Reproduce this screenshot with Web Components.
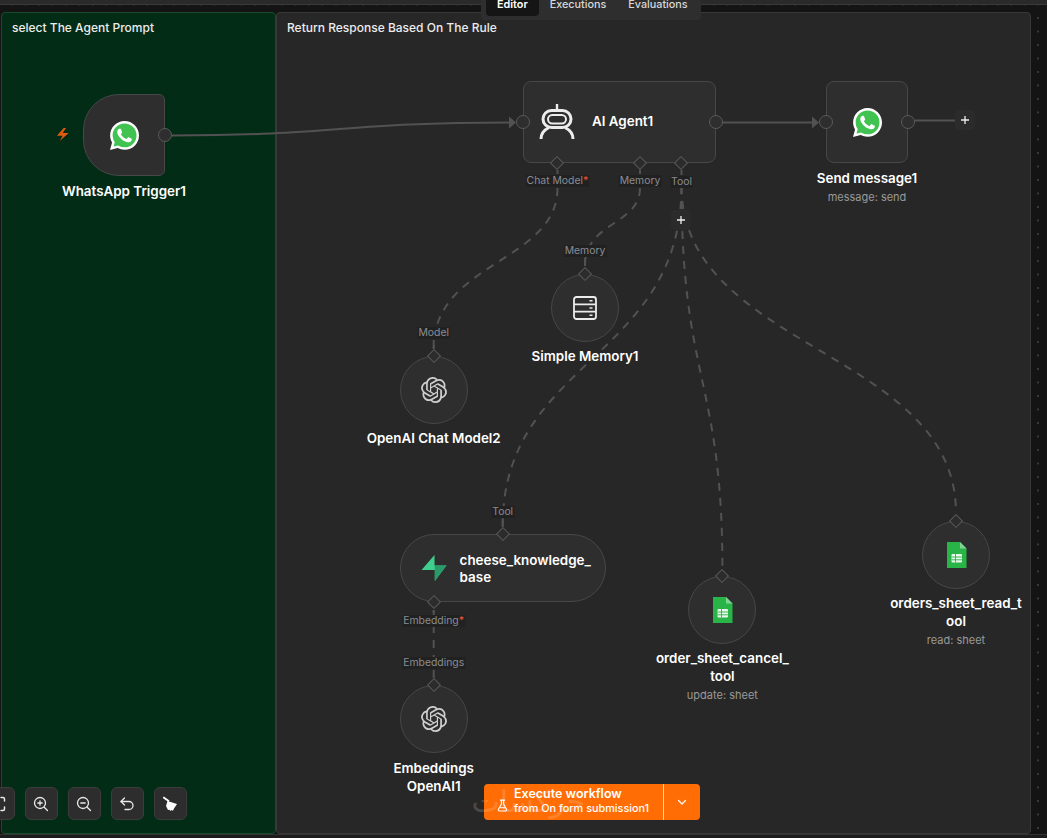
<!DOCTYPE html>
<html lang="en">
<head>
<meta charset="utf-8">
<title>Workflow editor</title>
<style>
    html, body { margin: 0; height: 100%; background: #141414; overflow: hidden; }
    body { font-family: Inter, "Liberation Sans", sans-serif; }
</style>
</head>
<body>
<wf-app>
    <wf-topbar slot="top">
        <wf-tab active>Editor</wf-tab>
        <wf-tab>Executions</wf-tab>
        <wf-tab>Evaluations</wf-tab>
    </wf-topbar>

    <wf-sticky x="1" y="12" w="275" h="822" tone="green">select The Agent Prompt</wf-sticky>
    <wf-sticky x="276" y="12" w="755" h="822">Return Response Based On The Rule</wf-sticky>

    <wf-edges></wf-edges>

    <wf-node cx="124" y="94" w="82" h="82" shape="trigger" out bolt gap="6">
        <wf-icon slot="icon" name="whatsapp" size="29"></wf-icon>
        WhatsApp Trigger1
    </wf-node>
    <wf-node cx="619.5" y="81" w="193" h="82" shape="wide" in out ports="34.5,117.5,158.5">
        <wf-icon slot="icon" name="robot" size="36"></wf-icon>
        <span slot="title">AI Agent1</span>
    </wf-node>
    <wf-node cx="867" y="81" w="82" h="82" in out sub="message: send" gap="6">
        <wf-icon slot="icon" name="whatsapp" size="29"></wf-icon>
        Send message1
    </wf-node>
    <wf-node cx="585" y="274" w="68" h="68" shape="circle" top-port>
        <wf-icon slot="icon" name="memory" size="24"></wf-icon>
        Simple Memory1
    </wf-node>
    <wf-node cx="433.7" y="356" w="68" h="68" shape="circle" top-port>
        <wf-icon slot="icon" name="openai" size="26"></wf-icon>
        OpenAI Chat Model2
    </wf-node>
    <wf-node cx="502.6" y="534" w="206" h="68" shape="pill" top-port ports="34.5">
        <wf-icon slot="icon" name="bolt" size="26"></wf-icon>
        <span slot="title">cheese_knowledge_<br>base</span>
    </wf-node>
    <wf-node cx="433.7" y="685" w="68" h="68" shape="circle" top-port gap="6">
        <wf-icon slot="icon" name="openai" size="26"></wf-icon>
        Embeddings<br>OpenAI1
    </wf-node>
    <wf-node cx="722.4" y="576" w="68" h="68" shape="circle" top-port sub="update: sheet">
        <wf-icon slot="icon" name="sheet" size="26"></wf-icon>
        order_sheet_cancel_<br>tool
    </wf-node>
    <wf-node cx="956" y="521" w="68" h="68" shape="circle" top-port sub="read: sheet">
        <wf-icon slot="icon" name="sheet" size="26"></wf-icon>
        orders_sheet_read_t<br>ool
    </wf-node>

    <wf-port x="557.5" y="181" required>Chat Model</wf-port>
    <wf-port x="640" y="181">Memory</wf-port>
    <wf-port x="681.5" y="182">Tool</wf-port>
    <wf-port x="585" y="251">Memory</wf-port>
    <wf-port x="433.7" y="333">Model</wf-port>
    <wf-port x="502.7" y="512">Tool</wf-port>
    <wf-port x="433.7" y="621" required>Embedding</wf-port>
    <wf-port x="433.7" y="663">Embeddings</wf-port>

    <wf-plus x="965" y="120"></wf-plus>
    <wf-plus x="681" y="220"></wf-plus>

    <wf-toolbar>
        <wf-tool-button name="fit"></wf-tool-button>
        <wf-tool-button name="zoomin"></wf-tool-button>
        <wf-tool-button name="zoomout"></wf-tool-button>
        <wf-tool-button name="undo"></wf-tool-button>
        <wf-tool-button name="broom"></wf-tool-button>
    </wf-toolbar>

    <wf-execute subtitle="from On form submission1">Execute workflow</wf-execute>
</wf-app>

<script>
const CANVAS_TOP = 5;
const NODE_BORDER = 1.5;

const ICONS = {
    whatsapp: `<svg viewBox="0 0 24 24"><path fill="#fff" d="M20.52 3.449C18.24 1.245 15.24 0 12.045 0 5.463 0 .104 5.334.101 11.893c0 2.096.549 4.14 1.595 5.945L0 24l6.335-1.652a12.062 12.062 0 005.71 1.447h.006c6.585 0 11.946-5.336 11.949-11.896 0-3.176-1.24-6.165-3.48-8.45z"/><path fill="#40c351" d="M12.051 21.785h-.004a9.87 9.87 0 01-5.031-1.378l-.361-.214-3.741.982.998-3.648-.235-.374a9.86 9.86 0 01-1.51-5.26c.001-5.45 4.436-9.884 9.888-9.884 2.64 0 5.122 1.03 6.988 2.898a9.825 9.825 0 012.893 6.994c-.003 5.45-4.437 9.884-9.885 9.884"/><path fill="#fff" d="M17.472 14.382c-.297-.149-1.758-.867-2.03-.967-.273-.099-.471-.148-.67.15-.197.297-.767.966-.94 1.164-.173.199-.347.223-.644.075-.297-.15-1.255-.463-2.39-1.475-.883-.788-1.48-1.761-1.653-2.059-.173-.297-.018-.458.13-.606.134-.133.298-.347.446-.52.149-.174.198-.298.298-.497.099-.198.05-.371-.025-.52-.075-.149-.669-1.612-.916-2.207-.242-.579-.487-.5-.669-.51-.173-.008-.371-.01-.57-.01-.198 0-.52.074-.792.372-.272.297-1.04 1.016-1.04 2.479 0 1.462 1.065 2.875 1.213 3.074.149.198 2.096 3.2 5.077 4.487.709.306 1.262.489 1.694.625.712.227 1.36.195 1.871.118.571-.085 1.758-.719 2.006-1.413.248-.694.248-1.289.173-1.413-.074-.124-.272-.198-.57-.347"/></svg>`,
    openai: `<svg viewBox="0 0 24 24"><path fill="#cfcfcf" d="M22.2819 9.8211a5.9847 5.9847 0 0 0-.5157-4.9108 6.0462 6.0462 0 0 0-6.5098-2.9A6.0651 6.0651 0 0 0 4.9807 4.1818a5.9847 5.9847 0 0 0-3.9977 2.9 6.0462 6.0462 0 0 0 .7427 7.0966 5.98 5.98 0 0 0 .511 4.9107 6.051 6.051 0 0 0 6.5146 2.9001A5.9847 5.9847 0 0 0 13.2599 24a6.0557 6.0557 0 0 0 5.7718-4.2058 5.9894 5.9894 0 0 0 3.9977-2.9001 6.0557 6.0557 0 0 0-.7475-7.0729zm-9.022 12.6081a4.4755 4.4755 0 0 1-2.8764-1.0408l.1419-.0804 4.7783-2.7582a.7948.7948 0 0 0 .3927-.6813v-6.7369l2.02 1.1686a.071.071 0 0 1 .038.052v5.5826a4.504 4.504 0 0 1-4.4945 4.4944zm-9.6607-4.1254a4.4708 4.4708 0 0 1-.5346-3.0137l.142.0852 4.783 2.7582a.7712.7712 0 0 0 .7806 0l5.8428-3.3685v2.3324a.0804.0804 0 0 1-.0332.0615L9.74 19.9502a4.4992 4.4992 0 0 1-6.1408-1.6464zM2.3408 7.8956a4.485 4.485 0 0 1 2.3655-1.9728V11.6a.7664.7664 0 0 0 .3879.6765l5.8144 3.3543-2.0201 1.1685a.0757.0757 0 0 1-.071 0l-4.8303-2.7865A4.504 4.504 0 0 1 2.3408 7.872zm16.5963 3.8558L13.1038 8.364 15.1192 7.2a.0757.0757 0 0 1 .071 0l4.8303 2.7913a4.4944 4.4944 0 0 1-.6765 8.1042v-5.6772a.79.79 0 0 0-.407-.667zm2.0107-3.0231l-.142-.0852-4.7735-2.7818a.7759.7759 0 0 0-.7854 0L9.409 9.2297V6.8974a.0662.0662 0 0 1 .0284-.0615l4.8303-2.7866a4.4992 4.4992 0 0 1 6.6802 4.66zM8.3065 12.863l-2.02-1.1638a.0804.0804 0 0 1-.038-.0567V6.0742a4.4992 4.4992 0 0 1 7.3757-3.4537l-.142.0805L8.704 5.459a.7948.7948 0 0 0-.3927.6813zm1.0976-2.3654l2.602-1.4998 2.6069 1.4998v2.9994l-2.5974 1.4997-2.6067-1.4997Z"/></svg>`,
    robot: `<svg viewBox="0 0 36 36" fill="none" stroke="#ececec"><path stroke-width="2.4" d="M18 0v6"/><rect x="4" y="6.500" width="28" height="17" rx="8.500" stroke-width="3"/><rect x="9" y="11" width="18" height="8.500" rx="4.250" stroke-width="2"/><path stroke-width="3" d="M2 35c0-5 3-9 8-11.500M34 35c0-5-3-9-8-11.500"/></svg>`,
    memory: `<svg viewBox="0 0 24 24" fill="none" stroke="#ececec" stroke-width="1.800"><rect x="1" y="1" width="22" height="22" rx="2.500"/><path d="M1 8.300h22M1 15.700h22"/><path stroke-width="1.500" d="M16.500 4.700h3M16.500 12h3M16.500 19.300h3"/></svg>`,
    bolt: `<svg viewBox="0 0 24 25"><path fill="#3ecf8e" d="M12.500 0 0 14.500h12.800V25L24 10H12.500z"/><path fill="#2a9a6b" d="M12.800 14.500V25L24 10H12.800z"/></svg>`,
    sheet: `<svg viewBox="-0.500 0 26 26"><path fill="#28b446" d="M3.500 0h13l6.500 6.500V26H3.500z"/><path fill="#7ed492" d="M16.500 0 23 6.500h-6.500z"/><rect x="8" y="12" width="10.500" height="8.500" rx="1" fill="#e9f7ec"/><path stroke="#28b446" stroke-width=".9" d="M8 15h10.500M8 17.800h10.500M12 12v8.500"/></svg>`,
    flask: `<svg viewBox="0 0 24 24" fill="none" stroke="#fff" stroke-width="2" stroke-linecap="round" stroke-linejoin="round"><path d="M10 2v7.500L4.500 19a2 2 0 0 0 1.700 3h11.600a2 2 0 0 0 1.700-3L14 9.500V2"/><path d="M8 2h8M7 16h10"/></svg>`,
    chevron: `<svg viewBox="0 0 12 12" fill="none" stroke="#fff" stroke-width="1.300" stroke-linecap="round" stroke-linejoin="round"><path d="m2.500 4.500 3.500 3.500 3.500-3.500"/></svg>`,
    fit: `<svg viewBox="0 0 16 16" fill="none" stroke="#e8e8e8" stroke-width="1.500" stroke-linecap="round"><path d="M1.500 5V3a1.500 1.500 0 0 1 1.500-1.500h2M11 1.500h2A1.500 1.500 0 0 1 14.500 3v2M14.500 11v2a1.500 1.500 0 0 1-1.500 1.500h-2M5 14.500H3A1.500 1.500 0 0 1 1.500 13v-2"/></svg>`,
    zoomin: `<svg viewBox="0 0 16 16" fill="none" stroke="#e8e8e8" stroke-width="1.300" stroke-linecap="round"><circle cx="7" cy="7" r="5.500"/><path d="m11.200 11.200 3.300 3.300M7 4.800v4.400M4.800 7h4.400"/></svg>`,
    zoomout: `<svg viewBox="0 0 16 16" fill="none" stroke="#e8e8e8" stroke-width="1.300" stroke-linecap="round"><circle cx="7" cy="7" r="5.500"/><path d="m11.200 11.200 3.300 3.300M4.800 7h4.400"/></svg>`,
    undo: `<svg viewBox="0 0 16 16" fill="none" stroke="#e8e8e8" stroke-width="1.300" stroke-linecap="round" stroke-linejoin="round"><path d="M5.500 2 2 5.500 5.500 9"/><path d="M2 5.500h8a4 4 0 0 1 0 8H6"/></svg>`,
    broom: `<svg viewBox="0 0 16 16"><path stroke="#fff" stroke-width="1.800" d="M1.300 1.300 7 5.300"/><path fill="#fff" d="M5.500 5 15 8l-3 4.500-1 2.300-1.500-.800-1 1-1-1.200-1.500.200L4 10z"/></svg>`
};

class WfApp extends HTMLElement {
    constructor() {
        super();
        this.attachShadow({ mode: "open" });
        this.shadowRoot.innerHTML = `
        <style>
            :host {
                display: grid;
                grid-template-rows: 5px 1fr 4px;
                width: 1047px;
                height: 838px;
                background: #141414;
                color: #fff;
                overflow: hidden;
            }
            #canvas {
                position: relative;
                overflow: visible;
                background-color: #141414;
                background-image: radial-gradient(circle at 1px 1px, #3a3a3a 0.8px, transparent 1px);
                background-size: 13.5px 13.5px;
                background-position: 11px -1.5px;
            }
            #bottom {
                background: #1c1c1c;
                border-top: 1px solid #333;
            }
        </style>
        <slot name="top"></slot>
        <div id="canvas"><slot></slot></div>
        <div id="bottom"></div>
        `;
    }
}

class WfTopbar extends HTMLElement {
    constructor() {
        super();
        this.attachShadow({ mode: "open" });
        this.shadowRoot.innerHTML = `
        <style>
            :host {
                display: block;
                position: relative;
                z-index: 5;
                height: 5px;
                box-sizing: border-box;
                background: #2a2a2a;
                border-bottom: 1px solid #3a3a3a;
            }
            /* tab switcher hangs over the top of the canvas */
            #tabs {
                position: absolute;
                left: 481px;
                bottom: -16px;
                width: 220px;
                height: 36px;
                box-sizing: border-box;
                padding: 0 5px 4px 5px;
                display: flex;
                align-items: flex-end;
                background: #2e2e2e;
                border-radius: 4px;
            }
        </style>
        <div id="tabs"><slot></slot></div>
        `;
    }
}

class WfTab extends HTMLElement {
    constructor() {
        super();
        this.attachShadow({ mode: "open" });
        this.shadowRoot.innerHTML = `
        <style>
            :host {
                padding: 0 11px 5px;
                height: 32px;
                box-sizing: border-box;
                display: flex;
                align-items: flex-end;
                font-size: 10.8px;
                line-height: 13px;
                font-weight: 500;
                color: #d8d8d8;
                border-radius: 4px;
            }
            :host([active]) {
                background: #151515;
                color: #fff;
                font-weight: 600;
            }
        </style>
        <slot></slot>
        `;
    }
}

class WfSticky extends HTMLElement {
    constructor() {
        super();
        this.attachShadow({ mode: "open" });
        this.shadowRoot.innerHTML = `
        <style>
            :host {
                position: absolute;
                box-sizing: border-box;
                padding: 7px 10px;
                font-size: 12px;
                line-height: 16px;
                font-weight: 500;
                color: #ececec;
                background: #272727;
                border: 1px solid #383838;
                border-radius: 4px;
            }
            :host([tone="green"]) {
                background: #032c17;
                border-color: #1a4a2d;
            }
        </style>
        <slot></slot>
        `;
    }

    connectedCallback() {
        this.style.left = this.getAttribute("x") + "px";
        this.style.top = (this.getAttribute("y") - CANVAS_TOP) + "px";
        this.style.width = this.getAttribute("w") + "px";
        this.style.height = this.getAttribute("h") + "px";
    }
}

class WfEdges extends HTMLElement {
    constructor() {
        super();
        this.attachShadow({ mode: "open" });
        const dashed = [
            "M557.500 188C557.500 262 433.700 262 433.700 348",
            "M640 188C640 225 585 222 585 265",
            "M681.500 186C681.500 360 502.700 360 502.700 526",
            "M681.500 186C681.500 380 722.400 380 722.400 568",
            "M681.500 186C681.500 350 956 350 956 513",
            "M433.700 610V678"
        ];
        this.shadowRoot.innerHTML = `
        <style>
            :host { position: absolute; inset: 0; display: block; }
            svg { display: block; overflow: visible; }
            path { fill: none; stroke: #525252; stroke-width: 2; }
            .dash { stroke-dasharray: 8 7; }
            .arrow { fill: #525252; stroke: none; }
        </style>
        <svg width="1047" height="829" viewBox="0 5 1047 829">
            <path d="M172 135.500C340 135.500 340 122.500 512 122.500"/>
            <path class="arrow" d="M509 116.500l7 6-7 6z"/>
            <path d="M722 122.500H813"/>
            <path class="arrow" d="M812 116.500l7 6-7 6z"/>
            <path d="M915 120.500H955"/>
            <path d="M557.500 170v4M640 170v4M681.500 170v5M585 258v8M433.700 340v9M502.700 519v8M433.700 610v3"/>
            ${dashed.map((d) => `<path class="dash" d="${d}"/>`).join("")}
        </svg>
        `;
    }
}

class WfNode extends HTMLElement {
    constructor() {
        super();
        this.attachShadow({ mode: "open" });
    }

    connectedCallback() {
        const w = Number(this.getAttribute("w"));
        const h = Number(this.getAttribute("h"));
        const shape = this.getAttribute("shape") || "square";
        const ports = (this.getAttribute("ports") || "").split(",").filter(Boolean);
        const sub = this.getAttribute("sub");
        const gap = this.getAttribute("gap") || "5";
        const hasTitle = shape === "wide" || shape === "pill";

        this.style.left = (this.getAttribute("cx") - 100) + "px";
        this.style.top = (this.getAttribute("y") - CANVAS_TOP) + "px";

        // handles are placed from the padding box, so take the border off
        const place = (x, y) => `left:${x - NODE_BORDER}px;top:${y - NODE_BORDER}px`;
        let handles = "";
        if (this.hasAttribute("in")) handles += `<i class="handle" style="${place(0, h / 2)}"></i>`;
        if (this.hasAttribute("out")) handles += `<i class="handle" style="${place(w, h / 2)}"></i>`;
        if (this.hasAttribute("top-port")) handles += `<i class="port" style="${place(w / 2 + 0.5, 0)}"></i>`;
        ports.forEach((p) => {
            handles += `<i class="port" style="${place(Number(p), h)}"></i>`;
        });

        this.shadowRoot.innerHTML = `
        <style>
            :host {
                position: absolute;
                display: flex;
                flex-direction: column;
                align-items: center;
                width: 200px;
            }
            #box {
                position: relative;
                box-sizing: border-box;
                width: ${w}px;
                height: ${h}px;
                flex: none;
                display: flex;
                align-items: center;
                justify-content: center;
                background: #2e2e2e;
                border: ${NODE_BORDER}px solid #474747;
                border-radius: 8px;
            }
            :host([shape="trigger"]) #box { border-radius: 36px 6px 6px 36px; }
            :host([shape="circle"]) #box { border-radius: 50%; }
            :host([shape="pill"]) #box { border-radius: 34px; justify-content: flex-start; padding-left: 20.5px; gap: 12.5px; }
            :host([shape="pill"]) #title { margin-top: 2px; }
            :host([shape="wide"]) #box { justify-content: flex-start; padding-left: 15px; gap: 17px; }
            :host([shape="wide"]) #title { margin-top: -2px; }
            .handle {
                position: absolute;
                width: 14px;
                height: 14px;
                box-sizing: border-box;
                margin: -7px 0 0 -7px;
                border: 1.5px solid #5a5a5a;
                border-radius: 50%;
                background: #2e2e2e;
            }
            .port {
                position: absolute;
                width: 10px;
                height: 10px;
                box-sizing: border-box;
                margin: -5px 0 0 -5px;
                border: 1.5px solid #5a5a5a;
                background: #2c2c2c;
                transform: rotate(45deg);
            }
            #bolt {
                position: absolute;
                left: -27.5px;
                top: 32.5px;
                width: 12px;
                height: 13px;
            }
            #title {
                font-size: 13.4px;
                line-height: 17px;
                font-weight: 600;
                color: #fff;
                white-space: nowrap;
            }
            #label {
                margin-top: ${gap}px;
                font-size: 13.4px;
                line-height: 18px;
                font-weight: 600;
                color: #fff;
                text-align: center;
                white-space: nowrap;
            }
            #sub {
                margin-top: 3px;
                font-size: 11px;
                line-height: 14px;
                color: #9a9a9a;
                white-space: nowrap;
            }
        </style>
        <div id="box">
            ${this.hasAttribute("bolt") ? `<svg id="bolt" viewBox="0 0 12 13"><path fill="#e05d0e" d="M6.700 0 0 7.700h5.700L2.700 13 11.700 5H5.700L9 0z"/></svg>` : ""}
            <slot name="icon"></slot>
            ${hasTitle ? `<div id="title"><slot name="title"></slot></div>` : ""}
            ${handles}
        </div>
        ${hasTitle ? "" : `<div id="label"><slot></slot></div>`}
        ${sub ? `<div id="sub">${sub}</div>` : ""}
        `;
    }
}

class WfIcon extends HTMLElement {
    constructor() {
        super();
        this.attachShadow({ mode: "open" });
    }

    connectedCallback() {
        const size = this.getAttribute("size") || 16;
        this.shadowRoot.innerHTML = `
        <style>
            :host { display: block; flex: none; width: ${size}px; height: ${size}px; }
            svg { display: block; width: 100%; height: 100%; }
        </style>
        ${ICONS[this.getAttribute("name")]}
        `;
    }
}

class WfPort extends HTMLElement {
    constructor() {
        super();
        this.attachShadow({ mode: "open" });
    }

    connectedCallback() {
        this.style.left = this.getAttribute("x") + "px";
        this.style.top = (this.getAttribute("y") - CANVAS_TOP) + "px";
        this.shadowRoot.innerHTML = `
        <style>
            :host {
                position: absolute;
                transform: translate(-50%, -50%);
                padding: 0 1px;
                font-size: 10.4px;
                line-height: 12px;
                color: #8a8d92;
                background: #212121;
                white-space: nowrap;
            }
            b { color: #e0502b; font-weight: 500; }
        </style>
        <slot></slot>${this.hasAttribute("required") ? "<b>*</b>" : ""}
        `;
    }
}

class WfPlus extends HTMLElement {
    constructor() {
        super();
        this.attachShadow({ mode: "open" });
        this.shadowRoot.innerHTML = `
        <style>
            :host {
                position: absolute;
                width: 20px;
                height: 20px;
                margin: -10px 0 0 -10px;
                display: flex;
                align-items: center;
                justify-content: center;
                background: #2b2b2b;
                border-radius: 4px;
            }
            svg { width: 10px; height: 10px; }
        </style>
        <svg viewBox="0 0 10 10" fill="none" stroke="#f0f0f0" stroke-width="1.300"><path d="M5 1v8M1 5h8"/></svg>
        `;
    }

    connectedCallback() {
        this.style.left = this.getAttribute("x") + "px";
        this.style.top = (this.getAttribute("y") - CANVAS_TOP) + "px";
    }
}

class WfToolbar extends HTMLElement {
    constructor() {
        super();
        this.attachShadow({ mode: "open" });
        this.shadowRoot.innerHTML = `
        <style>
            :host {
                position: absolute;
                left: -18px;
                top: 782px;
                display: flex;
                gap: 10.500px;
            }
        </style>
        <slot></slot>
        `;
    }
}

class WfToolButton extends HTMLElement {
    constructor() {
        super();
        this.attachShadow({ mode: "open" });
    }

    connectedCallback() {
        this.shadowRoot.innerHTML = `
        <style>
            :host {
                display: flex;
                align-items: center;
                justify-content: center;
                box-sizing: border-box;
                width: 32.500px;
                height: 33px;
                background: #2d2d2d;
                border: 1px solid #3c3c3c;
                border-radius: 6px;
            }
            svg { display: block; width: 16px; height: 16px; }
        </style>
        ${ICONS[this.getAttribute("name")]}
        `;
    }
}

class WfExecute extends HTMLElement {
    constructor() {
        super();
        this.attachShadow({ mode: "open" });
    }

    connectedCallback() {
        this.shadowRoot.innerHTML = `
        <style>
            :host {
                position: absolute;
                left: 484px;
                top: 779px;
                width: 216px;
                height: 36px;
                display: flex;
                color: #fff;
                background: #ff6d04;
                border-radius: 4px;
            }
            #main {
                flex: 1;
                display: flex;
                align-items: center;
                gap: 5px;
                padding-left: 12px;
            }
            #flask { width: 13px; height: 13px; flex: none; }
            #text { display: flex; flex-direction: column; margin-top: -2px; }
            #title { font-size: 12.5px; line-height: 15px; font-weight: 600; }
            #sub { font-size: 10.85px; line-height: 15px; font-weight: 500; white-space: nowrap; }
            #menu {
                width: 36px;
                display: flex;
                align-items: center;
                justify-content: center;
                border-left: 1px solid #ffd9bd;
            }
            #menu svg { width: 12px; height: 12px; }
            /* faint site watermark lying over the button */
            #mark {
                position: absolute;
                right: 115px;
                top: -2px;
                font-family: "DejaVu Sans", sans-serif;
                font-size: 30px;
                line-height: 40px;
                color: rgba(255, 255, 255, 0.18);
                white-space: nowrap;
                pointer-events: none;
            }
        </style>
        <div id="main">
            <div id="flask">${ICONS.flask}</div>
            <div id="text">
                <div id="title"><slot></slot></div>
                <div id="sub">${this.getAttribute("subtitle")}</div>
            </div>
        </div>
        <div id="menu">${ICONS.chevron}</div>
        <div id="mark" dir="rtl">خرکسات</div>
        `;
    }
}

customElements.define("wf-app", WfApp);
customElements.define("wf-topbar", WfTopbar);
customElements.define("wf-tab", WfTab);
customElements.define("wf-sticky", WfSticky);
customElements.define("wf-edges", WfEdges);
customElements.define("wf-node", WfNode);
customElements.define("wf-icon", WfIcon);
customElements.define("wf-port", WfPort);
customElements.define("wf-plus", WfPlus);
customElements.define("wf-toolbar", WfToolbar);
customElements.define("wf-tool-button", WfToolButton);
customElements.define("wf-execute", WfExecute);
</script>
</body>
</html>
